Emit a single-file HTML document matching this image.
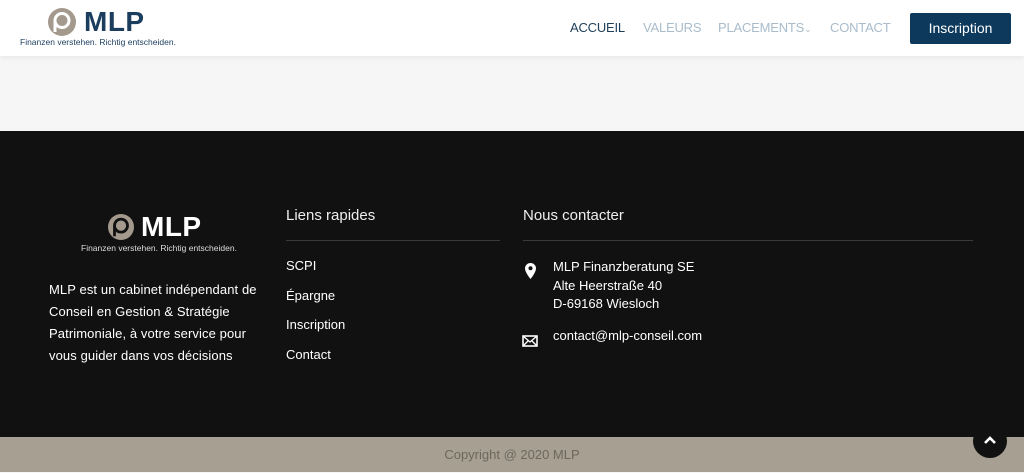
<!DOCTYPE html>
<html><head><meta charset="utf-8"><style>
*{margin:0;padding:0;box-sizing:border-box}
body{width:1024px;height:472px;overflow:hidden;font-family:"Liberation Sans",sans-serif;background:#f6f6f6;position:relative}
.hdr{position:absolute;left:0;top:0;width:1024px;height:56px;background:#fff;box-shadow:0 2px 6px rgba(0,0,0,.06)}
.logo{position:absolute;display:flex;align-items:center}
.nav{position:absolute;top:20px;font-size:13px;letter-spacing:-0.2px}
.btn{position:absolute;left:910px;top:13px;width:101px;height:31px;background:#0d3a5c;color:#fff;font-size:14px;text-align:center;line-height:31px;border-radius:2px}
.ft{position:absolute;left:0;top:131px;width:1024px;height:306px;background:#121112;color:#fff}
.bb{position:absolute;left:0;top:437px;width:1024px;height:35px;background:#a69f92;color:#6e675e;font-size:13px;text-align:center;line-height:36px}
.h{position:absolute;font-size:15px;color:#eee}
.line{position:absolute;height:1px;background:#3a3a3a}
.t{position:absolute;font-size:13px;color:#fff}
</style></head><body>
<div class="hdr">
  <div class="logo" style="left:48px;top:6px">
    <svg width="28" height="28" viewBox="0 0 28 28"><circle cx="14" cy="14" r="14" fill="#a39a8d"/><circle cx="14" cy="12.5" r="7" fill="none" stroke="#fff" stroke-width="3"/><path d="M7 13v11" stroke="#fff" stroke-width="3"/></svg>
    <span style="font-size:28px;font-weight:bold;color:#1b3d5e;margin-left:8px;letter-spacing:0.5px">MLP</span>
  </div>
  <div style="position:absolute;left:20px;top:37px;font-size:8.5px;color:#1b3d5e">Finanzen verstehen. Richtig entscheiden.</div>
  <div class="nav" style="left:570px;color:#1e3e58">ACCUEIL</div>
  <div class="nav" style="left:643px;color:#a9bccb">VALEURS</div>
  <div class="nav" style="left:718px;color:#a9bccb">PLACEMENTS<span style="font-size:9px">&#8964;</span></div>
  <div class="nav" style="left:830px;color:#a9bccb">CONTACT</div>
  <div class="btn">Inscription</div>
</div>
<div class="ft">
  <div class="logo" style="left:108px;top:80px">
    <svg width="26" height="26" viewBox="0 0 28 28"><circle cx="14" cy="14" r="14" fill="#a39a8d"/><circle cx="14" cy="12.5" r="7" fill="none" stroke="#121112" stroke-width="3"/><path d="M7 13v11" stroke="#121112" stroke-width="3"/></svg>
    <span style="font-size:28px;font-weight:bold;color:#fff;margin-left:7px;letter-spacing:0.5px">MLP</span>
  </div>
  <div style="position:absolute;left:81px;top:112px;font-size:8.5px;color:#ddd">Finanzen verstehen. Richtig entscheiden.</div>
  <div class="t" style="left:49px;top:148px;line-height:22px;width:218px;letter-spacing:0.1px">MLP est un cabinet indépendant de Conseil en Gestion &amp; Stratégie Patrimoniale, à votre service pour vous guider dans vos décisions</div>
  <div class="h" style="left:286px;top:76px">Liens rapides</div>
  <div class="line" style="left:286px;top:109px;width:214px"></div>
  <div class="t" style="left:286px;top:127px">SCPI</div>
  <div class="t" style="left:286px;top:157px">Épargne</div>
  <div class="t" style="left:286px;top:186px">Inscription</div>
  <div class="t" style="left:286px;top:216px">Contact</div>
  <div class="h" style="left:523px;top:76px">Nous contacter</div>
  <div class="line" style="left:523px;top:109px;width:450px"></div>
  <svg style="position:absolute;left:525px;top:132px" width="11" height="16" viewBox="0 0 11 16"><path d="M5.5 0C2.5 0 0 2.4 0 5.4 0 9.5 5.5 16 5.5 16S11 9.5 11 5.4C11 2.4 8.5 0 5.5 0z" fill="#fff"/><circle cx="5.5" cy="5.3" r="2" fill="#121112"/></svg>
  <div class="t" style="left:553px;top:127px;line-height:18.5px">MLP Finanzberatung SE<br>Alte Heerstraße 40<br>D-69168 Wiesloch</div>
  <svg style="position:absolute;left:522px;top:204px" width="16" height="12" viewBox="0 0 16 12"><rect x="1" y="1" width="14" height="10" fill="none" stroke="#fff" stroke-width="1.6"/><path d="M1 1l7 6 7-6M1 11l5-5M15 11l-5-5" fill="none" stroke="#fff" stroke-width="1.4"/></svg>
  <div class="t" style="left:553px;top:197px">contact@mlp-conseil.com</div>
</div>
<div class="bb">Copyright @ 2020 MLP</div>
<div style="position:absolute;left:973px;top:424px;width:34px;height:34px;border-radius:50%;background:#111"><svg width="34" height="34" viewBox="0 0 34 34"><path d="M12 19l5-5 5 5" fill="none" stroke="#fff" stroke-width="2.6"/></svg></div>
</body></html>
